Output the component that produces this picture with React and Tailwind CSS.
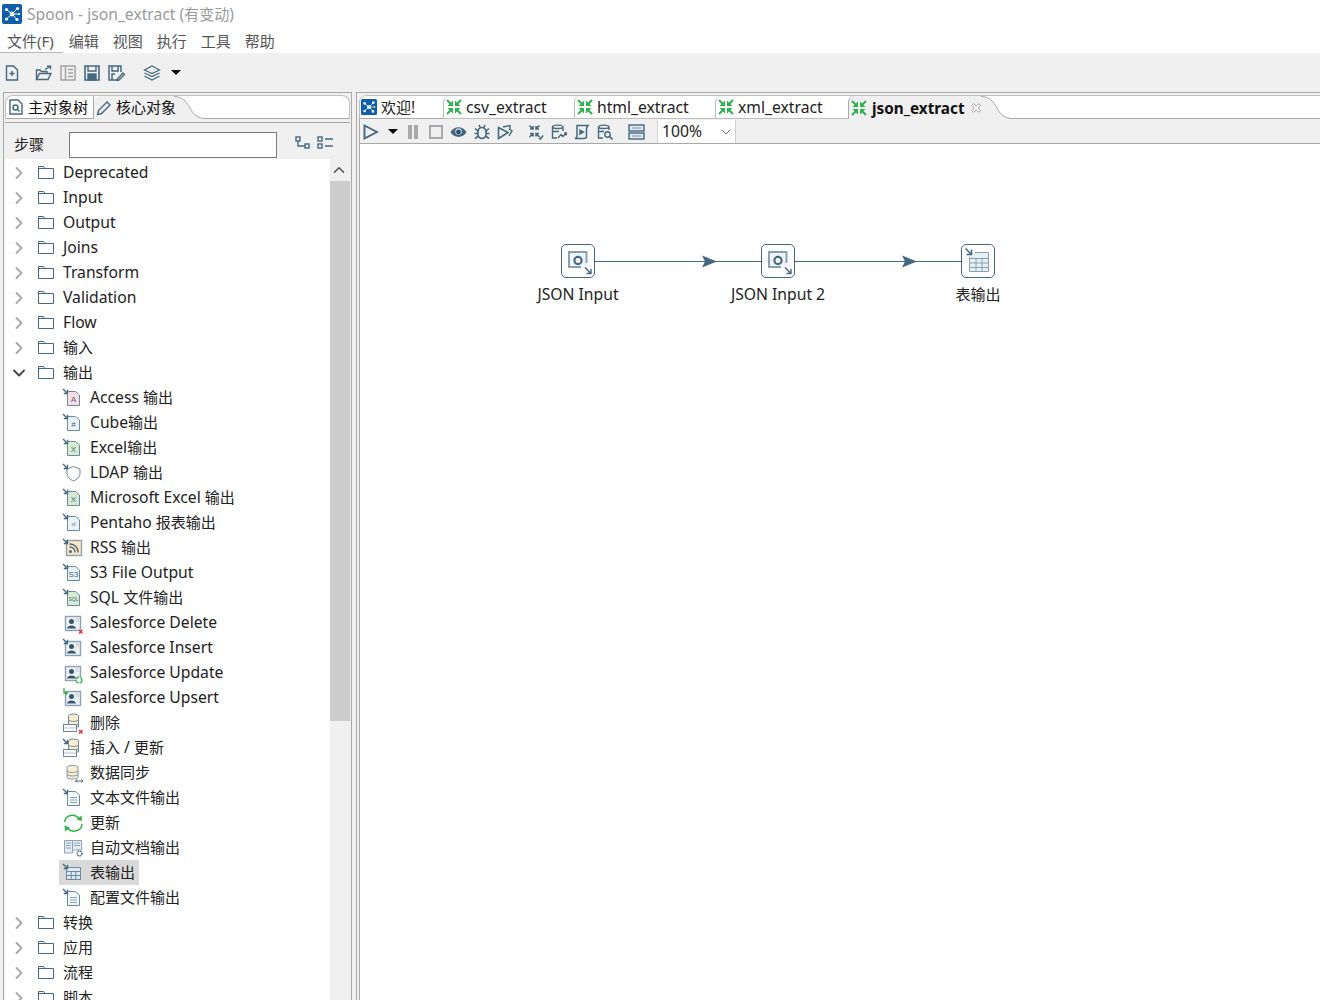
import { ChevronRight, ChevronDown, ChevronUp } from "lucide-react";

const BLUE = "#44687f";

const topFolders = ["Deprecated", "Input", "Output", "Joins", "Transform", "Validation", "Flow", "输入"];
const bottomFolders = ["转换", "应用", "流程", "脚本"];

const outputSteps = [
  { name: "Access 输出", icon: "doc", tint: "#fbdde3", mark: "A" },
  { name: "Cube输出", icon: "doc", tint: "#eaf3f9", mark: "#" },
  { name: "Excel输出", icon: "doc", tint: "#d5ecd0", mark: "X" },
  { name: "LDAP 输出", icon: "shield" },
  { name: "Microsoft Excel 输出", icon: "doc", tint: "#d5ecd0", mark: "X" },
  { name: "Pentaho 报表输出", icon: "doc", tint: "#eaf3f9", mark: "ııl" },
  { name: "RSS 输出", icon: "rss" },
  { name: "S3 File Output", icon: "doc", tint: "#eaf3f9", mark: "S3" },
  { name: "SQL 文件输出", icon: "doc", tint: "#d5ecd0", mark: "SQL" },
  { name: "Salesforce Delete", icon: "sales", badge: "x" },
  { name: "Salesforce Insert", icon: "sales", badge: "in" },
  { name: "Salesforce Update", icon: "sales", badge: "sync" },
  { name: "Salesforce Upsert", icon: "sales", badge: "up" },
  { name: "删除", icon: "db", badge: "x" },
  { name: "插入 / 更新", icon: "db", badge: "in" },
  { name: "数据同步", icon: "dbsync" },
  { name: "文本文件输出", icon: "text" },
  { name: "更新", icon: "refresh" },
  { name: "自动文档输出", icon: "book" },
  { name: "表输出", icon: "table", selected: true },
  { name: "配置文件输出", icon: "text" },
];

// latin runs are a touch larger than the cjk ones in the original ui font
function Mixed({ text }) {
  return text.split(/([\u4e00-\u9fff]+)/).map((part, i) =>
    /[\u4e00-\u9fff]/.test(part) ? (
      <span key={i} className="text-[15px]">
        {part}
      </span>
    ) : (
      part
    )
  );
}

function InArrow({ color = "#44687f" }) {
  return (
    <path d="M1 1 L5 5 M5.5 1.8 V5.5 H1.8" fill="none" stroke={color} strokeWidth="1.3" />
  );
}

function StepIcon({ step }) {
  const { icon, tint, mark, badge } = step;
  return (
    <svg width="20" height="20" viewBox="0 0 20 20" className="shrink-0 overflow-visible">
      {icon === "doc" && (
        <>
          <path d="M5.5 3.5 H13.5 L17.5 7 V17.5 H5.5 Z" fill={tint} stroke="#6a8aa0" />
          <text x="11.5" y={mark.length > 2 ? 13 : 14} textAnchor="middle" fontSize={mark.length > 2 ? 5 : 8} fill="#44687f" fontFamily="Liberation Sans">
            {mark}
          </text>
          <InArrow />
        </>
      )}
      {icon === "shield" && (
        <>
          <path d="M5 6 L11.5 3.5 L18 6 V10 C18 14 15 16.5 11.5 18 C8 16.5 5 14 5 10 Z" fill="#fff" stroke="#6a8aa0" />
          <InArrow />
        </>
      )}
      {icon === "rss" && (
        <>
          <rect x="4.5" y="2.5" width="15" height="15" fill="#fbe4c4" stroke="#8ea3b2" strokeWidth="1.4" />
          <circle cx="8.5" cy="13.5" r="1.5" fill="#44687f" />
          <path d="M7.5 9 A5 5 0 0 1 13 14.5 M7.5 6 A8 8 0 0 1 16 14.5" fill="none" stroke="#44687f" strokeWidth="1.4" />
          <InArrow />
        </>
      )}
      {icon === "sales" && (
        <>
          <rect x="3.5" y="3.5" width="15" height="14" fill="#eef1f4" stroke="#8ea3b2" strokeWidth="1.4" />
          <circle cx="9.5" cy="8.5" r="2.5" fill="#34566e" />
          <path d="M5 15.5 C5.5 11.5 13.5 11.5 14 15.5 Z" fill="#34566e" />
          <path d="M13.5 6 H17 M13.5 8 H17" stroke="#b9c6d0" />
        </>
      )}
      {icon === "db" && (
        <>
          <ellipse cx="11.5" cy="3" rx="5" ry="2" fill="#fbeccf" stroke="#6a8aa0" />
          <path d="M6.5 3 V14 H16.5 V3 M6.5 7 C8 9 15 9 16.5 7 M6.5 10.5 C8 12.5 15 12.5 16.5 10.5" fill="#fbeccf" stroke="#6a8aa0" />
          <rect x="1.5" y="11.5" width="13" height="7" fill="#fff" stroke="#6a8aa0" />
          <path d="M1.5 15 H14.5" stroke="#6a8aa0" strokeDasharray="1 1" />
        </>
      )}
      {icon === "dbsync" && (
        <>
          <ellipse cx="10.5" cy="4.5" rx="5.5" ry="2" fill="#fbeccf" stroke="#7d97a9" />
          <path d="M5 4.5 V14.5 C6 16.5 15 16.5 16 14.5 V4.5 M5 8 C7 10 14 10 16 8 M5 11.5 C7 13.5 14 13.5 16 11.5" fill="#fbeccf" stroke="#7d97a9" />
          <path d="M13.5 18 H21 M15 16.5 L13.5 18 L15 19.5 M19.5 16.5 L21 18 L19.5 19.5" fill="none" stroke="#44687f" />
        </>
      )}
      {icon === "text" && (
        <>
          <path d="M5.5 3.5 H13.5 L17.5 7 V17.5 H5.5 Z" fill="#f3f8fb" stroke="#6a8aa0" />
          <path d="M8 9.5 H15 M8 12 H15 M8 14.5 H15" stroke="#8ea3b2" />
          <InArrow />
        </>
      )}
      {icon === "refresh" && (
        <>
          <path d="M2.5 9 A8 7.5 0 0 1 17 5.5" fill="none" stroke="#33b24a" strokeWidth="1.5" />
          <path d="M20 11 A8 7.5 0 0 1 5.5 15" fill="none" stroke="#33b24a" strokeWidth="1.5" />
          <path d="M14.5 6.5 L20 8 L19.5 2.5 Z M8 14.5 L2.5 12.5 L3 18.5 Z" fill="#33b24a" />
        </>
      )}
      {icon === "book" && (
        <>
          <path d="M2.5 2.5 H10.5 V15 H2.5 Z M10.5 2.5 H19.5 V12 H10.5" fill="#e4ecf2" stroke="#8ea3b2" />
          <path d="M4 5 H9 M4 7.5 H9 M4 10 H9 M12 5 H18 M12 7.5 H18" stroke="#8ea3b2" />
          <circle cx="17.5" cy="15.5" r="2.4" fill="#fff" stroke="#44687f" strokeWidth="1.4" strokeDasharray="1.5 0.6" />
        </>
      )}
      {icon === "table" && (
        <>
          <rect x="4.5" y="4.5" width="14" height="12" fill="#dfe8ee" stroke="#6a8aa0" />
          <path d="M4.5 8.5 H18.5 M4.5 12.5 H18.5 M9.2 8.5 V16.5 M13.8 8.5 V16.5" stroke="#6a8aa0" />
          <InArrow />
        </>
      )}
      {badge === "x" && <path d="M17 17 L20.5 20.5 M20.5 17 L17 20.5" stroke="#e02b3a" strokeWidth="1.3" />}
      {badge === "in" && <InArrow />}
      {badge === "up" && <path d="M2 0 V5 H5 M3.5 3.5 L5.5 5 L3.5 6.5" fill="none" stroke="#33b24a" strokeWidth="1.3" />}
      {badge === "sync" && <circle cx="17" cy="17" r="3" fill="#fff" stroke="#33b24a" strokeWidth="1.3" strokeDasharray="4 1" />}
    </svg>
  );
}

function FolderIcon() {
  return (
    <svg width="16" height="13" viewBox="0 0 16 13" className="shrink-0">
      <path d="M0.5 12.5 V0.5 H5.5 L7 2.5 H15.5 V12.5 Z M0.5 2.5 H7" fill="none" stroke="#44687f" />
    </svg>
  );
}

function FolderRow({ name, open }) {
  const Chevron = open ? ChevronDown : ChevronRight;
  return (
    <div className="flex h-[25px] shrink-0 items-center text-[15.7px] text-[#222]">
      <div className="flex w-[33px] justify-end pr-[9px]">
        <Chevron size={20} strokeWidth={2.2} className={open ? "text-[#444]" : "text-[#a8a8a8]"} />
      </div>
      <div className="flex w-[25px] shrink-0">
        <FolderIcon />
      </div>
      <span>
        <Mixed text={name} />
      </span>
    </div>
  );
}

function StepRow({ step }) {
  return (
    <div className="flex h-[25px] shrink-0 items-center pl-[54px] text-[15.7px] text-[#222]">
      <div className={`flex h-[25px] items-center gap-2 pl-[3px] pr-1 ${step.selected ? "bg-[#d9d9d9]" : ""}`}>
        <StepIcon step={step} />
        <span>
          <Mixed text={step.name} />
        </span>
      </div>
    </div>
  );
}

function TransIcon() {
  return (
    <svg width="16" height="16" viewBox="0 0 16 16" className="shrink-0">
      <g stroke="#2eb24f" strokeWidth="2" fill="none">
        <path d="M1 1 L5 5 M15 1 L11 5 M1 15 L5 11 M15 15 L11 11" />
      </g>
      <path d="M7 7 V1.5 L1.5 7 Z M9 7 V1.5 L14.5 7 Z M7 9 V14.5 L1.5 9 Z M9 9 V14.5 L14.5 9 Z" fill="#2eb24f" />
    </svg>
  );
}

function SpoonLogo({ size = 20 }) {
  return (
    <svg width={size} height={size} viewBox="0 0 20 20" className="shrink-0">
      <rect width="20" height="20" rx="2" fill="#0f5fa8" />
      <path d="M10 10 L4.5 5.5 M10 10 L15.5 4.5 M10 10 L4.5 15 M10 10 L15 15.5 M10 10 L17 10" stroke="#fff" strokeWidth="0.9" />
      <circle cx="10" cy="10" r="2.4" fill="#fff" />
      <circle cx="4.5" cy="5.5" r="1.6" fill="#fff" />
      <circle cx="15.5" cy="4.5" r="1.6" fill="#fff" />
      <circle cx="4.5" cy="15" r="1.6" fill="#fff" />
      <circle cx="15" cy="15.5" r="1.6" fill="#fff" />
      <circle cx="17" cy="10" r="1" fill="#fff" />
    </svg>
  );
}

function ToolIcon({ w = 16, children, className = "" }) {
  return (
    <svg width={w} height="16" viewBox={`0 0 ${w} 16`} fill="none" stroke={BLUE} strokeWidth="1.4" className={`shrink-0 ${className}`}>
      {children}
    </svg>
  );
}

function MainToolbar() {
  return (
    <div className="flex h-[37px] shrink-0 items-center bg-[#f0f0f0] pl-[4px] pt-[2px]">
      <ToolIcon w={16}>
        <path d="M2.5 1 H9.5 L13.5 5 V15 H2.5 Z M8 6 V11 M5.5 8.5 H10.5" />
      </ToolIcon>
      <ToolIcon w={18} className="ml-[15px]">
        <path d="M1.5 14.5 V5 H5 L6.5 6.5 H12 V9 M1.5 14.5 H13 L16 8.5 H4.5 L1.5 14.5 Z M10 4.5 L15 1.5 M12 1.2 H15.5 V4.5" />
      </ToolIcon>
      <ToolIcon w={16} className="ml-[7px]">
        <g stroke="#a3a3a3" strokeWidth="1.5">
          <rect x="1" y="1" width="14" height="14" />
          <path d="M5.5 1 V15 M8 4.5 H13 M8 8 H13 M8 11.5 H13" />
        </g>
      </ToolIcon>
      <ToolIcon w={16} className="ml-[8px]">
        <path d="M1 1 H15 V15 H1 Z" strokeWidth="1.6" />
        <path d="M4 1 V6 H12 V1" />
        <rect x="4" y="9" width="8" height="6" fill={BLUE} />
      </ToolIcon>
      <ToolIcon w={17} className="ml-[8px]">
        <path d="M10 15 H1 V1 H13 V7 M4 1 V6 H10 V1 M4 15 V9 H7" strokeWidth="1.5" />
        <path d="M9 14.5 L15 8 L16.5 9.5 L10.5 15.5 H9 Z" />
      </ToolIcon>
      <ToolIcon w={18} className="ml-[18px]">
        <path d="M9 1 L16.5 5 L9 8.5 L1.5 5 Z M1.5 8 L9 11.5 L16.5 8 M1.5 11 L9 15 L16.5 11" strokeWidth="1.2" />
      </ToolIcon>
      <div className="ml-[10px] h-0 w-0 border-x-[5px] border-t-[5px] border-x-transparent border-t-black" />
    </div>
  );
}

function EditorToolbar() {
  return (
    <div className="flex h-[25px] shrink-0 items-center border-b border-[#a8a8a8] bg-[#f0f0f0] pl-[3px] pt-px">
      <ToolIcon w={16}>
        <path d="M1.5 1.5 L14 8 L1.5 14.5 Z" strokeWidth="1.9" />
      </ToolIcon>
      <div className="ml-[9px] h-0 w-0 border-x-[5px] border-t-[5px] border-x-transparent border-t-black" />
      <div className="ml-[10px] flex gap-[2px]">
        <div className="h-[14px] w-[4px] bg-[#a8a8a8]" />
        <div className="h-[14px] w-[4px] bg-[#a8a8a8]" />
      </div>
      <div className="ml-[11px] h-[14px] w-[14px] border-2 border-[#a8a8a8]" />
      <ToolIcon w={17} className="ml-[7px]">
        <path d="M0.5 8 C4 1.5 13 1.5 16.5 8 C13 14.5 4 14.5 0.5 8 Z" fill={BLUE} stroke="none" />
        <circle cx="8.5" cy="7.5" r="3.2" fill="#dfe8ee" stroke="none" />
        <circle cx="8.5" cy="8" r="2.4" fill="#2f5068" stroke="none" />
      </ToolIcon>
      <ToolIcon w={16} className="ml-[7px]">
        <ellipse cx="8" cy="9" rx="4.2" ry="5.5" strokeWidth="1.7" />
        <path d="M5 1 L6.5 4 M11 1 L9.5 4 M1 4.5 L4 7 M15 4.5 L12 7 M0.5 9.5 H4 M15.5 9.5 H12 M1 14.5 L4.5 12 M15 14.5 L11.5 12" strokeWidth="1.6" />
      </ToolIcon>
      <ToolIcon w={16} className="ml-[7px]">
        <path d="M1.5 3.5 L11 8.5 L1.5 14.5 Z" strokeWidth="1.6" />
        <path d="M6 3 L13 1.5 V5 M12 12 L15 7 L12 5" />
      </ToolIcon>
      <ToolIcon w={16} className="ml-[15px]">
        <path d="M1.5 1.5 L5 5 M5 2 V5 H2 M11.5 1.5 L8 5 M8 2 V5 H11 M1.5 13 L5 9.5 M5 12.5 V9.5 H2 M11.5 13 L8 9.5 M8 12.5 V9.5 H11 M11 14 L12.5 15 L15 11.5" strokeWidth="1.6" />
      </ToolIcon>
      <ToolIcon w={16} className="ml-[7px]">
        <path d="M6 14 H1.5 V3 C1.5 0.5 12 0.5 12 3 V7 M1.5 3 C2 5 12 5 12 3 M1.5 7.5 H8 M7 14 L10 10.5 L12 12.5 L15.5 9 M13 9 H15.5 V11.5" />
      </ToolIcon>
      <ToolIcon w={16} className="ml-[7px]">
        <path d="M3 1.5 H14 C12.5 3 12.5 4 12.5 5 V12.5 C12.5 14 11 14.5 9.5 14.5 H1 C2.5 14 3 13 3 12 Z" strokeWidth="1.5" />
        <path d="M6 6 L9.5 8 L6 10 Z" fill={BLUE} />
      </ToolIcon>
      <ToolIcon w={16} className="ml-[7px]">
        <path d="M6 14 H1.5 V3 C1.5 0.5 12 0.5 12 3 V6 M1.5 3 C2 5 12 5 12 3 M1.5 7.5 H7" />
        <circle cx="10.5" cy="10.5" r="2.7" />
        <path d="M12.5 12.5 L15.5 15.5" strokeWidth="1.7" />
      </ToolIcon>
      <ToolIcon w={17} className="ml-[15px]">
        <rect x="1" y="1" width="15" height="6" fill="#dfe8ee" />
        <rect x="1" y="9" width="15" height="6" fill="#dfe8ee" />
        <path d="M4 4 H13 M4 12 H13" strokeWidth="1" stroke="#7d97a9" />
      </ToolIcon>
      <div className="ml-[12px] flex h-[23px] w-[79px] items-center justify-between border-x border-[#d0d0d0] bg-white pl-[4px] pr-[1px] text-[15.7px] text-[#222]">
        <span>100%</span>
        <ChevronDown size={16} strokeWidth={1.3} className="text-[#555]" />
      </div>
    </div>
  );
}

function Tab({ label, width, logo }) {
  return (
    <div
      className={`flex h-full shrink-0 items-center border-b border-[#a8a8a8] bg-white text-[15.7px] text-[#222] ${logo ? "rounded-tl-[6px] pl-[1px]" : "rounded-tl-[6px] border-l border-[#bdbdbd] pl-[2px]"}`}
      style={{ width }}
    >
      {logo ? <SpoonLogo size={16} /> : <TransIcon />}
      <span className={logo ? "ml-[4px] pt-px" : "ml-[4px] pt-px"}>
        <Mixed text={label} />
      </span>
    </div>
  );
}

function ActiveTabCurve() {
  return (
    <svg width="32" height="23" viewBox="0 0 32 23" className="absolute left-full top-0">
      <path d="M0 0.5 C8 0.5 12 5 16 12 C20 20 25 22.5 32 22.5 V23 H0 Z" fill="#f0f0f0" />
      <path d="M0 0.5 C8 0.5 12 5 16 12 C20 20 25 22.5 32 22.5" fill="none" stroke="#a8a8a8" />
    </svg>
  );
}

function LeftPanel() {
  return (
    <div className="flex h-full w-[349px] shrink-0 flex-col overflow-hidden border border-b-0 border-[#a8a8a8] bg-[#f0f0f0] px-px pt-[2px]">
      <div className="flex h-[24px] shrink-0 rounded-t-[8px] border-x border-t border-[#c0c0c0] bg-white">
        <div className="flex h-full w-[88px] shrink-0 items-center gap-[5px] rounded-tl-[6px] border-b border-r border-[#a8a8a8] pl-[3px] text-[15px] text-[#111]">
          <svg width="14" height="16" viewBox="0 0 14 16" fill="none" stroke={BLUE} strokeWidth="1.4" className="shrink-0">
            <path d="M1 1 H9 L13 5 V15 H1 Z" />
            <circle cx="6.5" cy="8.5" r="2.5" />
            <path d="M8.5 10.5 L10.5 12.5" />
          </svg>
          <span>主对象树</span>
        </div>
        <div className="relative flex h-full w-[80px] shrink-0 items-center gap-[5px] rounded-tl-[6px] bg-[#f0f0f0] pl-[2px] text-[15px] text-[#111]">
          <svg width="15" height="16" viewBox="0 0 15 16" fill="none" stroke={BLUE} strokeWidth="1.4" className="shrink-0">
            <path d="M1.5 14.5 L2.5 10.5 L11 2 L14 5 L5.5 13.5 Z" />
          </svg>
          <span className="relative z-10 whitespace-nowrap">核心对象</span>
          <ActiveTabCurve />
        </div>
        <div className="min-w-0 flex-1 rounded-tr-[8px] border-b border-[#a8a8a8]" />
      </div>
      <div className="h-[4px] shrink-0 border-b border-[#a8a8a8]" />
      <div className="flex h-[36px] shrink-0 items-start pt-[9px]">
        <span className="ml-[9px] mt-[2px] w-[55px] text-[15px] leading-[20px] text-[#222]">步骤</span>
        <div className="h-[26px] w-[208px] border border-[#7a7a7a] bg-white" />
        <svg width="15" height="14" viewBox="0 0 15 14" fill="none" stroke={BLUE} strokeWidth="1.4" className="ml-[18px] mt-[4px]">
          <rect x="1" y="1" width="4" height="4" />
          <rect x="10" y="8" width="4" height="4" />
          <path d="M3 5 V10 H10" />
        </svg>
        <svg width="17" height="14" viewBox="0 0 17 14" fill="none" stroke={BLUE} strokeWidth="1.4" className="ml-[7px] mt-[4px]">
          <rect x="1" y="1" width="4" height="4" />
          <rect x="1" y="8" width="4" height="4" />
          <path d="M8 3 H16 M8 10 H16" />
        </svg>
      </div>
      <div className="flex min-h-0 flex-1">
        <div className="flex min-w-0 flex-1 flex-col overflow-hidden bg-white pt-px">
          {topFolders.map((name) => (
            <FolderRow key={name} name={name} />
          ))}
          <FolderRow name="输出" open />
          {outputSteps.map((step) => (
            <StepRow key={step.name} step={step} />
          ))}
          {bottomFolders.map((name) => (
            <FolderRow key={name} name={name} />
          ))}
        </div>
        <div className="flex w-[20px] shrink-0 flex-col bg-[#f0f0f0]">
          <div className="flex h-[22px] shrink-0 items-center justify-center pr-[2px]">
            <ChevronUp size={18} strokeWidth={2} className="text-[#505050]" />
          </div>
          <div className="h-[540px] shrink-0 bg-[#cdcdcd]" />
        </div>
      </div>
    </div>
  );
}

function DiagramNode({ left, label, labelWidth, kind }) {
  return (
    <div className="absolute top-[100px] flex flex-col items-center" style={{ left, width: labelWidth }}>
      <div className="flex h-[34px] w-[34px] items-center justify-center rounded-[5px] border border-[#44687f] bg-white">
        {kind === "json" ? (
          <svg width="26" height="26" viewBox="0 0 26 26" className="overflow-visible">
            <rect x="3" y="3" width="19" height="17" fill="#eef4f8" />
            <path d="M4 20 V4 H21.5 V15 M4 19 H16" fill="none" stroke="#8aa0b0" strokeWidth="2" />
            <circle cx="13" cy="12.5" r="3.6" fill="#fff" stroke="#44687f" strokeWidth="2.2" />
            <path d="M20 19.5 L26 25.5 M26 21 V25.5 H21.5" fill="none" stroke="#44687f" strokeWidth="1.4" />
          </svg>
        ) : (
          <svg width="26" height="26" viewBox="0 0 26 26">
            <rect x="4.5" y="4.5" width="19" height="18.5" fill="#e5f0f7" stroke="none" />
            <path d="M4.5 9 V23.5 H23.5 V4.5 H10 M4.5 10.5 H23.5 M4.5 15 H23.5 M4.5 19.5 H23.5 M11 10.5 V23.5 M17 10.5 V23.5" fill="none" stroke="#8aa0b0" />
            <path d="M0.5 0.5 L6.5 6.5 M6.5 1.5 V6.5 H1.5" fill="none" stroke="#44687f" strokeWidth="1.5" />
          </svg>
        )}
      </div>
      <span className="mt-[5px] whitespace-nowrap text-[15.7px] leading-[22px] text-[#222]">
        <Mixed text={label} />
      </span>
    </div>
  );
}

function Hop({ left }) {
  return (
    <svg width="166" height="14" viewBox="0 0 166 14" className="absolute top-[110px]" style={{ left }}>
      <path d="M0 7.5 H166" stroke="#44687f" />
      <path d="M107 1.5 L122 7.5 L107 13.5 L110 7.5 Z" fill="#44687f" />
    </svg>
  );
}

function EditorPanel() {
  return (
    <div className="flex h-full min-w-0 flex-1 flex-col border-l border-t border-[#a8a8a8] pl-[2px] pt-[2px]">
      <div className="flex h-[24px] shrink-0 rounded-tl-[8px] border-l border-t border-[#bdbdbd] bg-white">
        <Tab label="欢迎!" width={83} logo />
        <Tab label="csv_extract" width={131} />
        <Tab label="html_extract" width={141} />
        <Tab label="xml_extract" width={133} />
        <div className="relative flex h-full w-[133px] shrink-0 items-center rounded-tl-[6px] border-l border-[#a8a8a8] bg-[#f0f0f0] pl-[2px] text-[15.3px] font-bold text-[#111]">
          <TransIcon />
          <span className="ml-[5px] pt-px">json_extract</span>
          <svg width="12" height="12" viewBox="0 0 12 12" fill="#fff" stroke="#909090" className="ml-[6px]">
            <path d="M1 3 L3 1 L6 4 L9 1 L11 3 L8 6 L11 9 L9 11 L6 8 L3 11 L1 9 L4 6 Z" />
          </svg>
          <ActiveTabCurve />
        </div>
        <div className="min-w-0 flex-1 border-b border-[#a8a8a8]" />
      </div>
      <div className="flex min-h-0 flex-1 flex-col border-l border-[#a8a8a8]">
        <EditorToolbar />
        <div className="relative min-h-0 flex-1 bg-white">
          <Hop left={235} />
          <Hop left={435} />
          <DiagramNode left={177} label="JSON Input" labelWidth={82} kind="json" />
          <DiagramNode left={370} label="JSON Input 2" labelWidth={96} kind="json" />
          <DiagramNode left={595} label="表输出" labelWidth={46} kind="table" />
        </div>
      </div>
    </div>
  );
}

export default function App() {
  return (
    <div className="flex h-[1000px] w-[1320px] flex-col overflow-hidden bg-white font-['Noto_Sans','Noto_Sans_CJK_SC',sans-serif]">
      <div className="flex h-[28px] shrink-0 items-center gap-[5px] pl-[2px] text-[15.7px] text-[#9a9a9a]">
        <SpoonLogo />
        <span className="pt-[2px]">
          <Mixed text="Spoon - json_extract (有变动)" />
        </span>
      </div>
      <div className="flex h-[25px] shrink-0 items-stretch gap-[14px] text-[15px] leading-[22px] text-[#555]">
        <span className="mr-[-8px] border-b border-[#b8b8b8] pl-[7px] pr-[9px] pt-[2px]">文件(F)</span>
        <span className="pt-[2px]">编辑</span>
        <span className="pt-[2px]">视图</span>
        <span className="pt-[2px]">执行</span>
        <span className="pt-[2px]">工具</span>
        <span className="pt-[2px]">帮助</span>
      </div>
      <MainToolbar />
      <div className="flex min-h-0 flex-1 gap-[4px] bg-[#f0f0f0] pl-[3px] pt-[2px]">
        <LeftPanel />
        <EditorPanel />
      </div>
    </div>
  );
}
